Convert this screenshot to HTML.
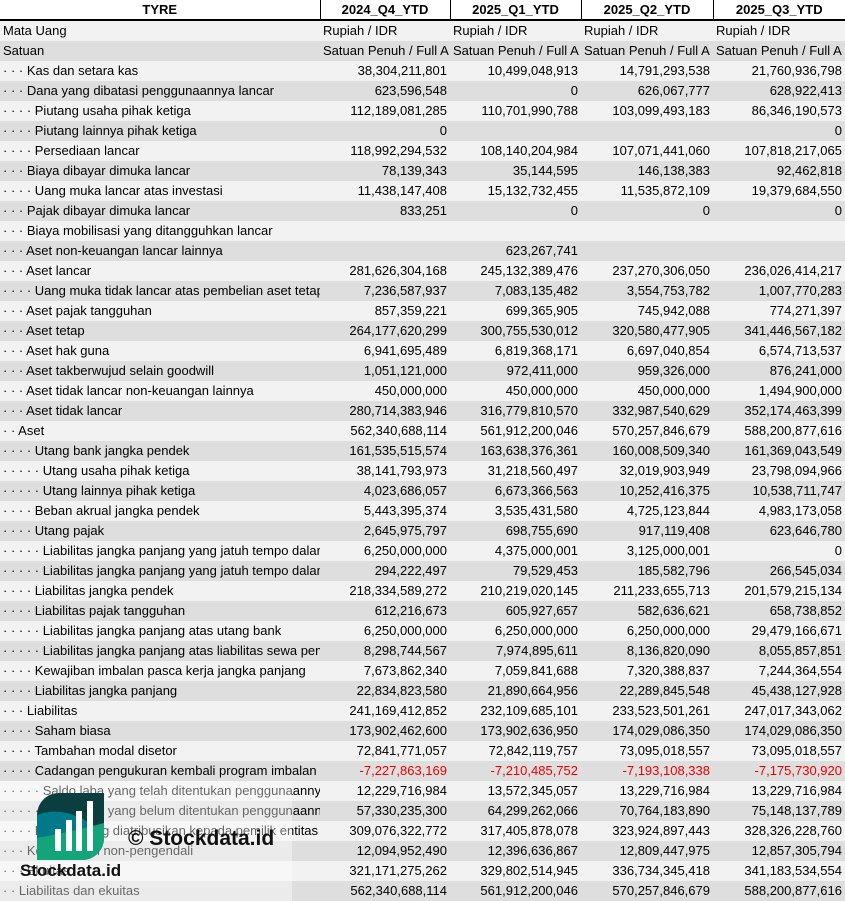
<!DOCTYPE html>
<html><head><meta charset="utf-8"><style>
body{margin:0;width:845px;height:901px;overflow:hidden;background:#fff;font-family:"Liberation Sans",Arial,sans-serif;font-size:13px;color:#000;position:relative}
table{border-collapse:collapse;table-layout:fixed;width:845px}
td{height:20px;padding:0 3px;white-space:nowrap;overflow:hidden;line-height:20px}
td.n{text-align:right}
tr:nth-child(even) td{background:#f2f2f2}
tr:nth-child(odd) td{background:#dedede}
tr.h td{background:#fff;font-weight:bold;text-align:center;border-bottom:2px solid #000;border-left:1px solid #000;height:19px;line-height:19px}
tr.h td:first-child{border-left:none}
.r{color:#e00}
</style></head><body>
<table>
<colgroup><col style="width:320px"><col style="width:130px"><col style="width:131px"><col style="width:132px"><col style="width:132px"></colgroup>
<tr class="h"><td>TYRE</td><td>2024_Q4_YTD</td><td>2025_Q1_YTD</td><td>2025_Q2_YTD</td><td>2025_Q3_YTD</td></tr>
<tr><td>Mata Uang</td><td>Rupiah / IDR</td><td>Rupiah / IDR</td><td>Rupiah / IDR</td><td>Rupiah / IDR</td></tr>
<tr><td>Satuan</td><td>Satuan Penuh / Full A</td><td>Satuan Penuh / Full A</td><td>Satuan Penuh / Full A</td><td>Satuan Penuh / Full A</td></tr>
<tr><td>· · · Kas dan setara kas</td><td class="n">38,304,211,801</td><td class="n">10,499,048,913</td><td class="n">14,791,293,538</td><td class="n">21,760,936,798</td></tr>
<tr><td>· · · Dana yang dibatasi penggunaannya lancar</td><td class="n">623,596,548</td><td class="n">0</td><td class="n">626,067,777</td><td class="n">628,922,413</td></tr>
<tr><td>· · · · Piutang usaha pihak ketiga</td><td class="n">112,189,081,285</td><td class="n">110,701,990,788</td><td class="n">103,099,493,183</td><td class="n">86,346,190,573</td></tr>
<tr><td>· · · · Piutang lainnya pihak ketiga</td><td class="n">0</td><td class="n"></td><td class="n"></td><td class="n">0</td></tr>
<tr><td>· · · · Persediaan lancar</td><td class="n">118,992,294,532</td><td class="n">108,140,204,984</td><td class="n">107,071,441,060</td><td class="n">107,818,217,065</td></tr>
<tr><td>· · · Biaya dibayar dimuka lancar</td><td class="n">78,139,343</td><td class="n">35,144,595</td><td class="n">146,138,383</td><td class="n">92,462,818</td></tr>
<tr><td>· · · · Uang muka lancar atas investasi</td><td class="n">11,438,147,408</td><td class="n">15,132,732,455</td><td class="n">11,535,872,109</td><td class="n">19,379,684,550</td></tr>
<tr><td>· · · Pajak dibayar dimuka lancar</td><td class="n">833,251</td><td class="n">0</td><td class="n">0</td><td class="n">0</td></tr>
<tr><td>· · · Biaya mobilisasi yang ditangguhkan lancar</td><td></td><td></td><td></td><td></td></tr>
<tr><td>· · · Aset non-keuangan lancar lainnya</td><td class="n"></td><td class="n">623,267,741</td><td></td><td></td></tr>
<tr><td>· · · Aset lancar</td><td class="n">281,626,304,168</td><td class="n">245,132,389,476</td><td class="n">237,270,306,050</td><td class="n">236,026,414,217</td></tr>
<tr><td>· · · · Uang muka tidak lancar atas pembelian aset tetap</td><td class="n">7,236,587,937</td><td class="n">7,083,135,482</td><td class="n">3,554,753,782</td><td class="n">1,007,770,283</td></tr>
<tr><td>· · · Aset pajak tangguhan</td><td class="n">857,359,221</td><td class="n">699,365,905</td><td class="n">745,942,088</td><td class="n">774,271,397</td></tr>
<tr><td>· · · Aset tetap</td><td class="n">264,177,620,299</td><td class="n">300,755,530,012</td><td class="n">320,580,477,905</td><td class="n">341,446,567,182</td></tr>
<tr><td>· · · Aset hak guna</td><td class="n">6,941,695,489</td><td class="n">6,819,368,171</td><td class="n">6,697,040,854</td><td class="n">6,574,713,537</td></tr>
<tr><td>· · · Aset takberwujud selain goodwill</td><td class="n">1,051,121,000</td><td class="n">972,411,000</td><td class="n">959,326,000</td><td class="n">876,241,000</td></tr>
<tr><td>· · · Aset tidak lancar non-keuangan lainnya</td><td class="n">450,000,000</td><td class="n">450,000,000</td><td class="n">450,000,000</td><td class="n">1,494,900,000</td></tr>
<tr><td>· · · Aset tidak lancar</td><td class="n">280,714,383,946</td><td class="n">316,779,810,570</td><td class="n">332,987,540,629</td><td class="n">352,174,463,399</td></tr>
<tr><td>· · Aset</td><td class="n">562,340,688,114</td><td class="n">561,912,200,046</td><td class="n">570,257,846,679</td><td class="n">588,200,877,616</td></tr>
<tr><td>· · · · Utang bank jangka pendek</td><td class="n">161,535,515,574</td><td class="n">163,638,376,361</td><td class="n">160,008,509,340</td><td class="n">161,369,043,549</td></tr>
<tr><td>· · · · · Utang usaha pihak ketiga</td><td class="n">38,141,793,973</td><td class="n">31,218,560,497</td><td class="n">32,019,903,949</td><td class="n">23,798,094,966</td></tr>
<tr><td>· · · · · Utang lainnya pihak ketiga</td><td class="n">4,023,686,057</td><td class="n">6,673,366,563</td><td class="n">10,252,416,375</td><td class="n">10,538,711,747</td></tr>
<tr><td>· · · · Beban akrual jangka pendek</td><td class="n">5,443,395,374</td><td class="n">3,535,431,580</td><td class="n">4,725,123,844</td><td class="n">4,983,173,058</td></tr>
<tr><td>· · · · Utang pajak</td><td class="n">2,645,975,797</td><td class="n">698,755,690</td><td class="n">917,119,408</td><td class="n">623,646,780</td></tr>
<tr><td>· · · · · Liabilitas jangka panjang yang jatuh tempo dalam</td><td class="n">6,250,000,000</td><td class="n">4,375,000,001</td><td class="n">3,125,000,001</td><td class="n">0</td></tr>
<tr><td>· · · · · Liabilitas jangka panjang yang jatuh tempo dalam</td><td class="n">294,222,497</td><td class="n">79,529,453</td><td class="n">185,582,796</td><td class="n">266,545,034</td></tr>
<tr><td>· · · · Liabilitas jangka pendek</td><td class="n">218,334,589,272</td><td class="n">210,219,020,145</td><td class="n">211,233,655,713</td><td class="n">201,579,215,134</td></tr>
<tr><td>· · · · Liabilitas pajak tangguhan</td><td class="n">612,216,673</td><td class="n">605,927,657</td><td class="n">582,636,621</td><td class="n">658,738,852</td></tr>
<tr><td>· · · · · Liabilitas jangka panjang atas utang bank</td><td class="n">6,250,000,000</td><td class="n">6,250,000,000</td><td class="n">6,250,000,000</td><td class="n">29,479,166,671</td></tr>
<tr><td>· · · · · Liabilitas jangka panjang atas liabilitas sewa pem</td><td class="n">8,298,744,567</td><td class="n">7,974,895,611</td><td class="n">8,136,820,090</td><td class="n">8,055,857,851</td></tr>
<tr><td>· · · · Kewajiban imbalan pasca kerja jangka panjang</td><td class="n">7,673,862,340</td><td class="n">7,059,841,688</td><td class="n">7,320,388,837</td><td class="n">7,244,364,554</td></tr>
<tr><td>· · · · Liabilitas jangka panjang</td><td class="n">22,834,823,580</td><td class="n">21,890,664,956</td><td class="n">22,289,845,548</td><td class="n">45,438,127,928</td></tr>
<tr><td>· · · Liabilitas</td><td class="n">241,169,412,852</td><td class="n">232,109,685,101</td><td class="n">233,523,501,261</td><td class="n">247,017,343,062</td></tr>
<tr><td>· · · · Saham biasa</td><td class="n">173,902,462,600</td><td class="n">173,902,636,950</td><td class="n">174,029,086,350</td><td class="n">174,029,086,350</td></tr>
<tr><td>· · · · Tambahan modal disetor</td><td class="n">72,841,771,057</td><td class="n">72,842,119,757</td><td class="n">73,095,018,557</td><td class="n">73,095,018,557</td></tr>
<tr><td>· · · · Cadangan pengukuran kembali program imbalan</td><td class="n r">-7,227,863,169</td><td class="n r">-7,210,485,752</td><td class="n r">-7,193,108,338</td><td class="n r">-7,175,730,920</td></tr>
<tr><td>· · · · · Saldo laba yang telah ditentukan penggunaannya</td><td class="n">12,229,716,984</td><td class="n">13,572,345,057</td><td class="n">13,229,716,984</td><td class="n">13,229,716,984</td></tr>
<tr><td>· · · · · Saldo laba yang belum ditentukan penggunaannya</td><td class="n">57,330,235,300</td><td class="n">64,299,262,066</td><td class="n">70,764,183,890</td><td class="n">75,148,137,789</td></tr>
<tr><td>· · · · Ekuitas yang diatribusikan kepada pemilik entitas</td><td class="n">309,076,322,772</td><td class="n">317,405,878,078</td><td class="n">323,924,897,443</td><td class="n">328,326,228,760</td></tr>
<tr><td>· · · Kepentingan non-pengendali</td><td class="n">12,094,952,490</td><td class="n">12,396,636,867</td><td class="n">12,809,447,975</td><td class="n">12,857,305,794</td></tr>
<tr><td>· · · Ekuitas</td><td class="n">321,171,275,262</td><td class="n">329,802,514,945</td><td class="n">336,734,345,418</td><td class="n">341,183,534,554</td></tr>
<tr><td>· · Liabilitas dan ekuitas</td><td class="n">562,340,688,114</td><td class="n">561,912,200,046</td><td class="n">570,257,846,679</td><td class="n">588,200,877,616</td></tr>
</table>
<div style="position:absolute;left:0;top:781px;width:292px;height:120px;background:rgba(255,255,255,0.4)"></div>
<svg style="position:absolute;left:37px;top:793px" width="67" height="67" viewBox="0 0 67 67">
<defs><clipPath id="c"><path d="M22 0H67V45A22 22 0 0 1 45 67H0V22A22 22 0 0 1 22 0Z"/></clipPath></defs>
<g clip-path="url(#c)">
<rect width="67" height="67" fill="#0b3f3f"/>
<path d="M0 22Q30 10 67 40V67H0Z" fill="#007a8a"/>
<path d="M0 45Q30 40 67 30V67H0Z" fill="#12a57a"/>
</g>
<rect x="18" y="36" width="6" height="22" fill="#fff"/>
<rect x="29" y="27" width="6" height="31" fill="#fff"/>
<rect x="39" y="18" width="6" height="40" fill="#fff"/>
<rect x="50" y="8" width="6" height="50" fill="#fff"/>
</svg>
<div style="position:absolute;left:128px;top:827px;font-weight:bold;font-size:21px;color:#111">© Stockdata.id</div>
<div style="position:absolute;left:20px;top:861px;font-weight:bold;font-size:17px;color:#111">Stockdata.id</div>
</body></html>
